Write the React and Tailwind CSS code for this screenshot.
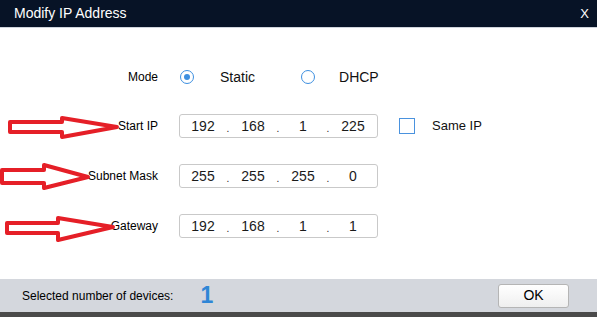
const IpBox = ({ parts }) => (
  <div className="flex items-center h-[24px] w-[199px] border border-[#c9c9c9] rounded-[3px] bg-white text-[14px] text-[#1a1a1a]">
    {parts.map((p, i) => (
      <div key={i} className="flex items-center">
        {i > 0 && <span className="w-[4px] text-center text-[10px] leading-none translate-y-[3px]">.</span>}
        <span className="w-[46px] text-center">{p}</span>
      </div>
    ))}
  </div>
);

const Radio = ({ checked }) => (
  <span className="w-[14px] h-[14px] rounded-full border border-[#3d8fe0] flex items-center justify-center bg-white">
    {checked && <span className="w-[6px] h-[6px] rounded-full bg-[#3d8fe0]" />}
  </span>
);

const Row = ({ label, children }) => (
  <div className="flex items-center h-[24px]">
    <div className="w-[158px] text-right text-[12px] text-black">{label}</div>
    <div className="ml-[21px] flex items-center">{children}</div>
  </div>
);

const Arrows = () => (
  <svg className="absolute left-0 top-0 pointer-events-none" width="597" height="317">
    <g fill="none" stroke="#e51f27" strokeWidth="4" strokeLinejoin="round">
      <polygon points="10,122 62,122 62,118 117,127 62,137 62,132 10,132" />
      <polygon points="2,170 44,170 44,165 88,177 44,188 44,183 2,183" />
      <polygon points="7,223 58,223 58,218 113,227 58,240 58,233 7,233" />
    </g>
  </svg>
);

export default function App() {
  return (
    <div className="relative w-[597px] h-[317px] overflow-hidden flex flex-col bg-white font-['Liberation_Sans',Arial,sans-serif]">
      {/* Title bar */}
      <div className="h-[28px] shrink-0 bg-[#071326] border-b border-[#cfd4dc] flex items-center justify-between pl-[14px] pr-[8px]">
        <span className="text-white text-[14px]">Modify IP Address</span>
        <span className="text-white text-[13px]">X</span>
      </div>

      {/* Body */}
      <div className="flex-1 flex flex-col pt-[37px]">
        <div className="flex items-center h-[24px]">
          <div className="w-[158px] text-right text-[12px] text-black">Mode</div>
          <div className="ml-[22px] flex items-center text-[14px] text-[#111]">
            <Radio checked />
            <span className="ml-[26px]">Static</span>
            <span className="ml-[46px]"><Radio /></span>
            <span className="ml-[24px]">DHCP</span>
          </div>
        </div>

        <div className="mt-[25px] flex flex-col gap-[26px]">
          <Row label="Start IP">
            <IpBox parts={["192", "168", "1", "225"]} />
            <span className="ml-[21px] w-[16px] h-[16px] border border-[#4a92de] bg-white" />
            <span className="ml-[17px] text-[13px] text-[#111]">Same IP</span>
          </Row>
          <Row label="Subnet Mask">
            <IpBox parts={["255", "255", "255", "0"]} />
          </Row>
          <Row label="Gateway">
            <IpBox parts={["192", "168", "1", "1"]} />
          </Row>
        </div>
      </div>

      {/* Footer */}
      <div className="h-[33px] shrink-0 bg-[#d4d7dd] flex items-center pl-[22px] pr-[28px]">
        <span className="text-[12px] text-black">Selected number of devices:</span>
        <span className="ml-[27px] text-[23px] font-bold text-[#2f86d6] leading-none">1</span>
        <button className="ml-auto w-[71px] h-[24px] rounded-[3px] border border-[#b5b5b5] bg-gradient-to-b from-white to-[#efefef] text-[14px] text-black">
          OK
        </button>
      </div>
      <div className="h-[5px] shrink-0 bg-[#4a4a4a]" />

      <Arrows />
    </div>
  );
}
